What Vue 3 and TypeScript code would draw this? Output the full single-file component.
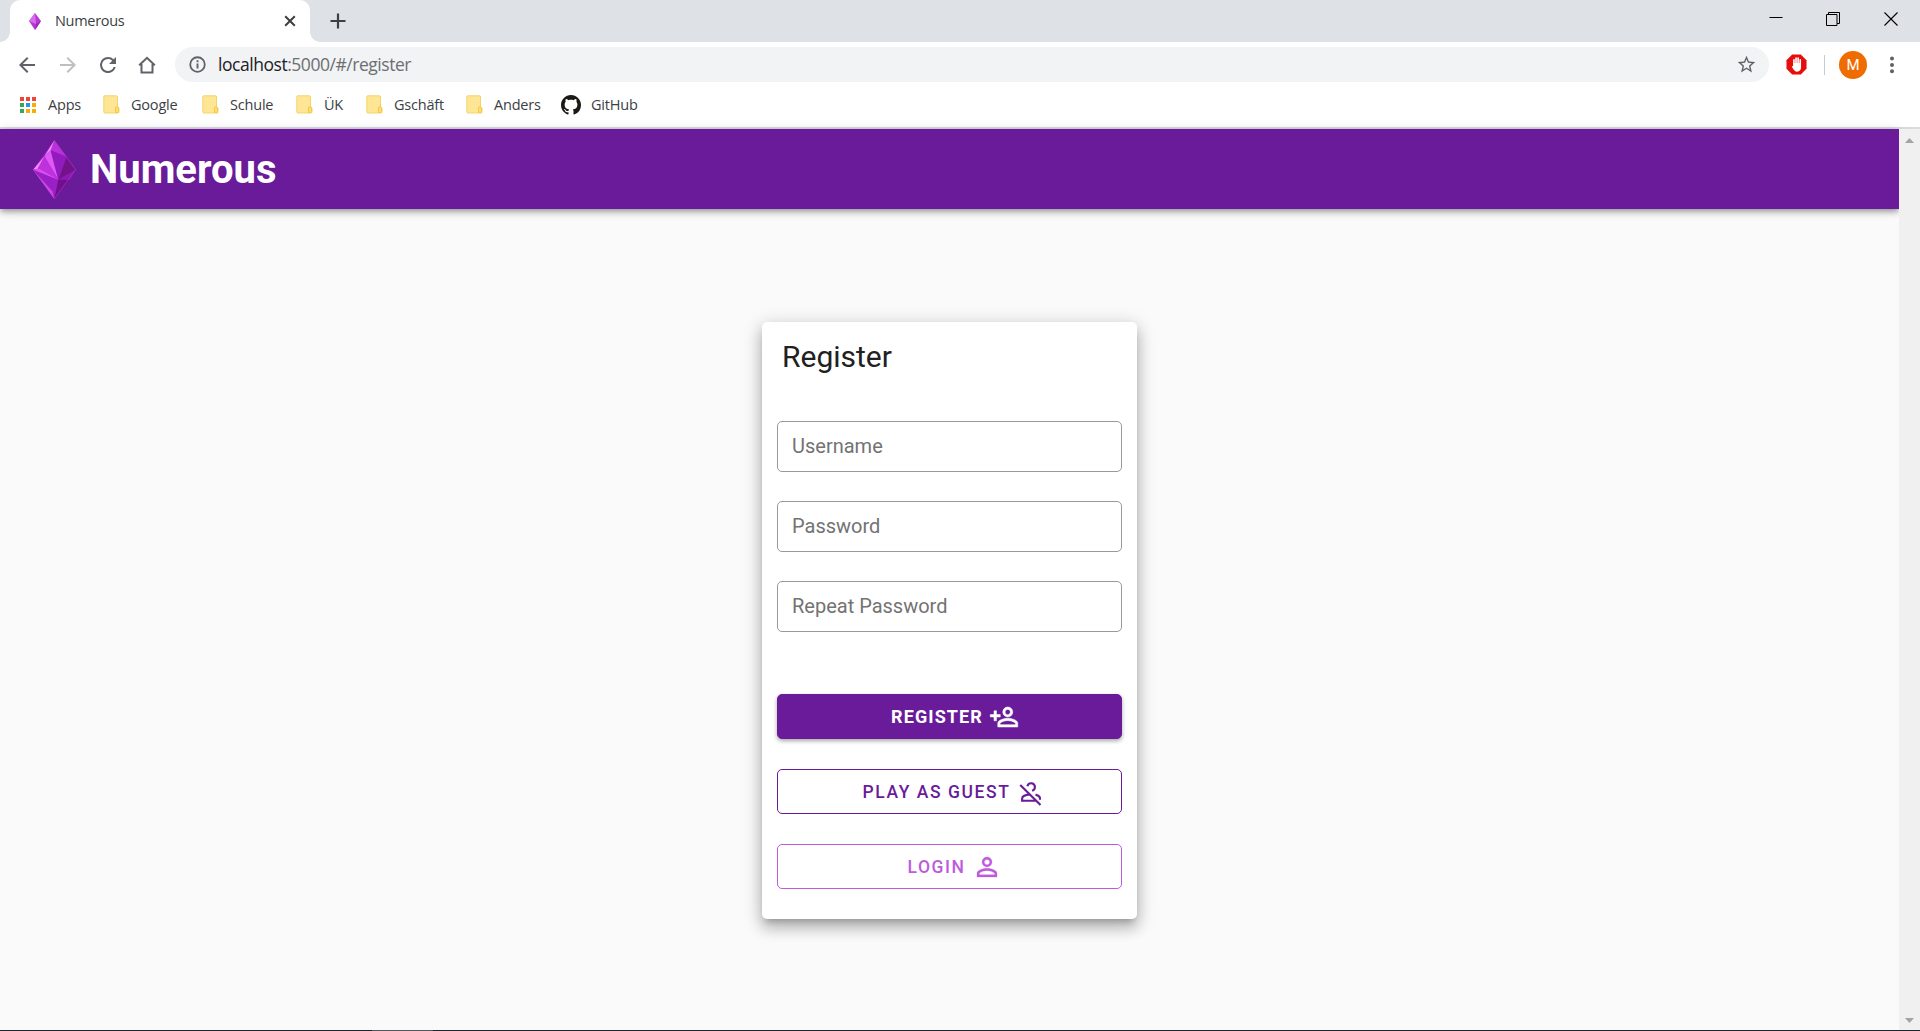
<script setup lang="ts">
interface Bookmark { label: string; width: number }

const folders: Bookmark[] = [
  { label: 'Google', width: 99 },
  { label: 'Schule', width: 94 },
  { label: 'ÜK', width: 70 },
  { label: 'Gschäft', width: 100 },
  { label: 'Anders', width: 95 },
]
const fields: string[] = ['Username', 'Password', 'Repeat Password']
const squares: string[] = ['#f44336', '#f44336', '#f44336', '#34a853', '#2196f3', '#fbab09', '#34a853', '#fbab09', '#fbab09']
</script>

<template>
  <div class="window">
    <div class="tabstrip">
      <div class="tab">
        <svg class="favicon" viewBox="0 0 12 17" width="12" height="17">
          <path d="M6 0 12 8 6 17 0 8Z" fill="#b43bd0" />
          <path d="M6 0 0 8 7 11Z" fill="#d96cec" />
          <path d="M12 8 7 11 6 17Z" fill="#9b28b5" />
        </svg>
        <span class="tab-title">Numerous</span>
        <svg class="tab-close" viewBox="0 0 12 12" width="12" height="12"><path d="M1.2 1.2 10.8 10.8M10.8 1.2 1.2 10.8" stroke="#3c4043" stroke-width="2" /></svg>
      </div>
      <svg class="newtab" viewBox="0 0 16 16" width="16" height="16"><path d="M8 .5V15.500M.5 8H15.500" stroke="#3c4043" stroke-width="2.200" /></svg>
      <div class="controls">
        <svg viewBox="0 0 14 14" width="14" height="14"><path d="M.5 5.500H13.500" stroke="#000" /></svg>
        <svg viewBox="0 0 14 14" width="14" height="14"><path d="M.5 2.500H11V13.500H.5ZM2.500 2.500V.5H13.500V11.500H11" fill="none" stroke="#000" /></svg>
        <svg viewBox="0 0 14 14" width="14" height="14"><path d="M.5.5 13.500 13.500M13.500.5.5 13.500" stroke="#000" stroke-width="1.100" /></svg>
      </div>
    </div>

    <div class="toolbar">
      <svg class="nav" viewBox="0 0 24 24"><path d="M20 11H7.830L13.420 5.410 12 4 4 12 12 20 13.410 18.590 7.830 13H20Z" fill="#5f6368" /></svg>
      <svg class="nav" viewBox="0 0 24 24"><path d="M4 11H16.170L10.580 5.410 12 4 20 12 12 20 10.590 18.590 16.170 13H4Z" fill="#bdc0c3" /></svg>
      <svg class="nav" viewBox="0 0 24 24"><path d="M17.650 6.350A7.960 7.960 0 0 0 12 4a8 8 0 1 0 7.730 10h-2.080A6 6 0 1 1 12 6c1.660 0 3.140.69 4.220 1.780L13 11h7V4Z" fill="#5f6368" /></svg>
      <svg class="nav" viewBox="0 0 24 24"><path d="M4.200 12.300 12 4.800l7.800 7.500M6.500 11v8.500h11v-8.500" fill="none" stroke="#5f6368" stroke-width="2" /></svg>
      <div class="omnibox">
        <svg viewBox="0 0 18 18" width="17" height="17"><circle cx="9" cy="9" r="7.700" fill="none" stroke="#5f6368" stroke-width="1.900" /><path d="M9 8V13.200M9 4.600V6.600" stroke="#5f6368" stroke-width="2" /></svg>
        <span class="url"><b>localhost</b>:5000/#/register</span>
        <svg class="star" viewBox="0 0 24 24" width="21" height="21"><path d="M22 9.240l-7.190-.62L12 2 9.190 8.630 2 9.240l5.460 4.730L5.820 21 12 17.270 18.180 21l-1.630-7.030L22 9.240ZM12 15.400l-3.760 2.270 1-4.280-3.320-2.880 4.380-.38L12 6.100l1.710 4.040 4.380.38-3.320 2.880 1 4.280L12 15.400Z" fill="#5f6368" /></svg>
      </div>
      <svg class="blocker" viewBox="0 0 22 22" width="21" height="21">
        <path d="M6.500.5h9l6 6v9l-6 6h-9l-6-6v-9Z" fill="#e80d0d" />
        <path d="M8.300 11V6M10.500 10V4.300M12.700 10V4.300M14.900 12V6" stroke="#fff" stroke-width="1.700" stroke-linecap="round" />
        <path d="M7.450 9.500h8.300v4.500c0 3-1.700 4.500-4 4.500-2.200 0-3.600-1.500-5.700-5.500l1.400-.5Z" fill="#fff" />
      </svg>
      <i class="divider"></i>
      <span class="avatar">M</span>
      <svg class="menu" viewBox="0 0 6 18" width="6" height="18"><g fill="#5f6368"><circle cx="3" cy="2.500" r="2" /><circle cx="3" cy="9" r="2" /><circle cx="3" cy="15.300" r="2" /></g></svg>
    </div>

    <div class="bookmarks">
      <div class="apps"><i v-for="(c, n) in squares" :key="n" :style="{ background: c }"></i></div>
      <span class="apps-label">Apps</span>
      <div v-for="b in folders" :key="b.label" class="bookmark" :style="{ width: b.width + 'px' }">
        <svg viewBox="0 0 17 19" width="17" height="19"><path d="M1.500.8H13.200Q14.500.8 14.500 2V12.500L16 13V17Q16 18 15 18H2Q.8 18 .8 17V2Q.8.8 1.500.8Z" fill="#ffe694" stroke="#f3d46c" /><path d="M12.500 17.500V13Q12.500 11.800 14 11.800T15.500 13V16.500Q15.500 17.500 14.500 17.500Z" fill="#ffdf6e" stroke="#f2c94c" /></svg>
        <span>{{ b.label }}</span>
      </div>
      <svg class="octocat" viewBox="0 0 16 16" width="20" height="20"><path fill="#1b1817" d="M8 0C3.580 0 0 3.580 0 8c0 3.540 2.290 6.530 5.470 7.590.4.070.55-.17.55-.38 0-.19-.01-.82-.01-1.490-2.010.37-2.530-.49-2.690-.94-.09-.23-.48-.94-.82-1.130-.28-.15-.68-.52-.01-.53.63-.01 1.080.58 1.230.82.72 1.210 1.870.87 2.330.66.07-.52.28-.87.51-1.070-1.780-.2-3.640-.89-3.640-3.950 0-.87.31-1.590.82-2.150-.08-.2-.36-1.020.08-2.120 0 0 .67-.21 2.200.82.64-.18 1.320-.27 2-.27s1.360.09 2 .27c1.530-1.040 2.200-.82 2.200-.82.44 1.100.16 1.920.08 2.120.51.56.82 1.270.82 2.150 0 3.070-1.870 3.750-3.650 3.950.29.25.54.73.54 1.480 0 1.070-.01 1.930-.01 2.200 0 .21.15.46.55.38A8 8 0 0 0 16 8c0-4.420-3.580-8-8-8Z" /></svg>
      <span>GitHub</span>
    </div>

    <div class="viewport">
      <div class="page">
        <header class="appbar">
          <svg class="logo" viewBox="99 59 129 178" width="43" height="59.300">
            <path d="M163 60 227 148 163 236 99 148Z" fill="#9a1fc4" />
            <path d="M163 60 200 110 152 90Z" fill="#bb30da" />
            <path d="M163 60 152 90 133 108Z" fill="#f688fb" />
            <path d="M152 90 133 108 175 178Z" fill="#df57f7" />
            <path d="M133 108 106 148 175 178Z" fill="#bd32dc" />
            <path d="M133 108 99 148 112 146Z" fill="#f688fb" />
            <path d="M99 148 118 145 175 178Z" fill="#d84df0" />
            <path d="M152 90 200 110 175 178Z" fill="#911bbc" />
            <path d="M200 110 227 148 175 178Z" fill="#74128a" />
            <path d="M227 148 210 179 175 178Z" fill="#8b1ab1" />
            <path d="M175 178 210 179 163 236Z" fill="#701090" />
            <path d="M99 148 163 236 157 213Z" fill="#cd45e7" />
            <path d="M163 60 227 148 163 236" fill="none" stroke="#a63ac4" stroke-width="2" />
          </svg>
          <h1>Numerous</h1>
        </header>
        <main>
          <section class="card">
            <h2>Register</h2>
            <div v-for="f in fields" :key="f" class="field">{{ f }}</div>
            <div class="btn solid">
              <span>REGISTER</span>
              <svg viewBox="0 0 24 24"><path fill="currentColor" stroke="currentColor" stroke-width=".4" d="M15,4A4,4 0 0,0 11,8A4,4 0 0,0 15,12A4,4 0 0,0 19,8A4,4 0 0,0 15,4M15,5.900C16.160,5.900 17.100,6.840 17.100,8C17.100,9.160 16.160,10.100 15,10.100A2.100,2.100 0 0,1 12.900,8A2.100,2.100 0 0,1 15,5.900M4,7V10H1V12H4V15H6V12H9V10H6V7H4M15,13C12.330,13 7,14.330 7,17V20H23V17C23,14.330 17.670,13 15,13M15,14.900C17.970,14.900 21.100,16.360 21.100,17V18.100H8.900V17C8.900,16.360 12,14.900 15,14.900Z" /></svg>
            </div>
            <div class="btn guest">
              <span>PLAY AS GUEST</span>
              <svg viewBox="0 0 24 24"><g fill="none" stroke="currentColor" stroke-width="1.700"><path d="M9.100 7.400A3.050 3.050 0 1 1 12.900 11M11 13.900C8 14.300 4.900 15.600 4.900 17.200V19H15.500M15.600 14.100C17.900 14.800 19.200 15.900 19.200 17.200V18.200M3.400 6.400 19.600 22.400" /></g></svg>
            </div>
            <div class="btn login">
              <span>LOGIN</span>
              <svg viewBox="0 0 24 24"><path fill="currentColor" stroke="currentColor" stroke-width=".2" d="M12,4A4,4 0 0,1 16,8A4,4 0 0,1 12,12A4,4 0 0,1 8,8A4,4 0 0,1 12,4M12,5.900A2.100,2.100 0 0,0 9.900,8A2.100,2.100 0 0,0 12,10.100A2.100,2.100 0 0,0 14.100,8A2.100,2.100 0 0,0 12,5.900M12,13C14.670,13 20,14.330 20,17V20H4V17C4,14.330 9.330,13 12,13M12,14.900C9.030,14.900 5.900,16.360 5.900,17V18.100H18.100V17C18.100,16.360 14.970,14.900 12,14.900Z" /></svg>
            </div>
          </section>
        </main>
      </div>
      <div class="scrollbar">
        <svg viewBox="0 0 9 5" width="9" height="5"><path d="M0 5 4.500 0 9 5Z" fill="#a3a3a3" /></svg>
        <svg viewBox="0 0 9 5" width="9" height="5"><path d="M0 0 4.500 5 9 0Z" fill="#a3a3a3" /></svg>
      </div>
    </div>
    <div class="taskbar"><i></i></div>
  </div>
</template>

<style>
body { margin: 0; overflow: hidden; }
</style>

<style scoped>
* { box-sizing: border-box; }
svg { display: block; flex: none; }
.window { width: 1920px; height: 1031px; display: flex; flex-direction: column; background: #fff; font-family: "Open Sans", "Noto Sans", sans-serif; font-size: 14.5px; color: #3c4043; overflow: hidden; }
.window > div { flex: none; }
.tabstrip { height: 42px; background: #dee1e6; display: flex; align-items: flex-start; padding-left: 10px; }
.tab { position: relative; width: 300px; height: 42px; background: #fff; border-radius: 10px 10px 0 0; display: flex; align-items: center; padding-left: 19px; }
.tab::before, .tab::after { content: ""; position: absolute; bottom: 0; width: 10px; height: 10px; }
.tab::before { left: -10px; background: radial-gradient(circle at 0 0, transparent 9.5px, #fff 10px); }
.tab::after { right: -10px; background: radial-gradient(circle at 100% 0, transparent 9.5px, #fff 10px); }
.tab-title { margin-left: 14px; padding-bottom: 1px; letter-spacing: -.3px; flex: 1; }
.tab-close { margin-right: 14px; }
.newtab { margin: 13px 0 0 20px; }
.controls { margin: 12px 22px 0 auto; display: flex; gap: 43px; }
.controls svg:nth-child(2) { margin-right: 1px; }
.toolbar { height: 46px; padding-top: 5px; display: flex; align-items: center; padding-bottom: 6px; }
.nav { width: 24px; height: 24px; margin-left: 16px; }
.nav:first-child { margin-left: 15px; }
.nav:nth-child(2) { margin-left: 17px; }
.nav:nth-child(4) { margin-left: 15px; }
.omnibox { width: 1594px; height: 35px; border-radius: 18px; background: #f1f3f4; margin-left: 16px; padding: 0 12px 0 14px; display: flex; align-items: center; }
.url { margin-left: 12px; padding-bottom: 1px; font-size: 17.5px; letter-spacing: -.46px; color: #6b6f73; flex: 1; }
.url b { font-weight: 400; color: #202124; }
.blocker { margin-left: 17px; }
.divider { width: 1px; height: 20px; background: #c8cbcf; margin-left: 17px; }
.avatar { width: 28px; height: 28px; border-radius: 50%; background: #ef6c00; color: #fff; margin-left: 14px; text-align: center; font: 15px/28px Roboto, sans-serif; }
.menu { margin-left: 22px; }
.bookmarks { height: 39px; display: flex; align-items: center; padding: 0 0 6px 20px; letter-spacing: -.2px; }
.apps { display: grid; grid-template-columns: repeat(3, 4px); gap: 2px; width: 17px; }
.apps i { height: 4px; }
.apps-label { width: 55px; margin-left: 11px; }
.bookmark { display: flex; align-items: center; gap: 11px; white-space: nowrap; }
.octocat { margin-right: 10px; }
.viewport { height: 903px; border-top: 2px solid #d8dbe0; display: flex; }
.page { width: 1899px; background: #fafafa; display: flex; flex-direction: column; font-family: Roboto, sans-serif; }
.appbar { height: 80px; flex: none; background: #6a1b9a; display: flex; align-items: center; padding-left: 33px; box-shadow: 0 2px 5px -1px rgba(0,0,0,.25), 0 4px 6px rgba(0,0,0,.16), 0 1px 12px rgba(0,0,0,.12); }
.logo { margin-top: 1px; }
h1 { margin: 2px 0 0 14px; font-size: 40px; line-height: 50px; color: #fff; font-weight: 700; letter-spacing: 0; }
main { flex: 1; display: flex; justify-content: center; align-items: flex-start; padding-top: 113px; }
.card { width: 375px; height: 597px; background: #fff; border-radius: 5px; padding: 0 15px; box-shadow: 0 6px 6px -4px rgba(0,0,0,.2), 0 10px 13px 1px rgba(0,0,0,.14), 0 4px 18px 2px rgba(0,0,0,.18); }
h2 { margin: 15px 0 44px 5px; font-size: 30px; line-height: 40px; font-weight: 400; color: #212121; }
.field { height: 51px; margin-bottom: 29px; border: 1px solid #999; border-radius: 5px; padding-left: 14px; font-size: 20px; line-height: 48px; color: #737373; letter-spacing: 0; }
.btn { height: 45px; border: 1px solid; border-radius: 5px; margin-bottom: 30px; display: flex; justify-content: center; align-items: center; font-size: 17.5px; font-weight: 500; letter-spacing: 1.5625px; gap: 6px; }
.btn svg { width: 30px; height: 30px; margin-right: -10px; }
.solid { margin-top: 62px; background: #6a1b9a; border-color: #6a1b9a; color: #fff; font-size: 18px; font-weight: 700; letter-spacing: 1.1px; box-shadow: 0 2px 4px rgba(0,0,0,.35); }
.solid svg { margin-right: -11px; }
.guest { color: #6a1b9a; }
.login { color: #be5bdc; }
.scrollbar { width: 21px; background: #f0f0f0; display: flex; flex-direction: column; justify-content: space-between; align-items: center; padding: 9px 0 7px; }
.taskbar { height: 1px; background: #1d252b; padding-left: 372px; }
.taskbar i { display: block; width: 61px; height: 1px; background: #50565a; }
</style>
